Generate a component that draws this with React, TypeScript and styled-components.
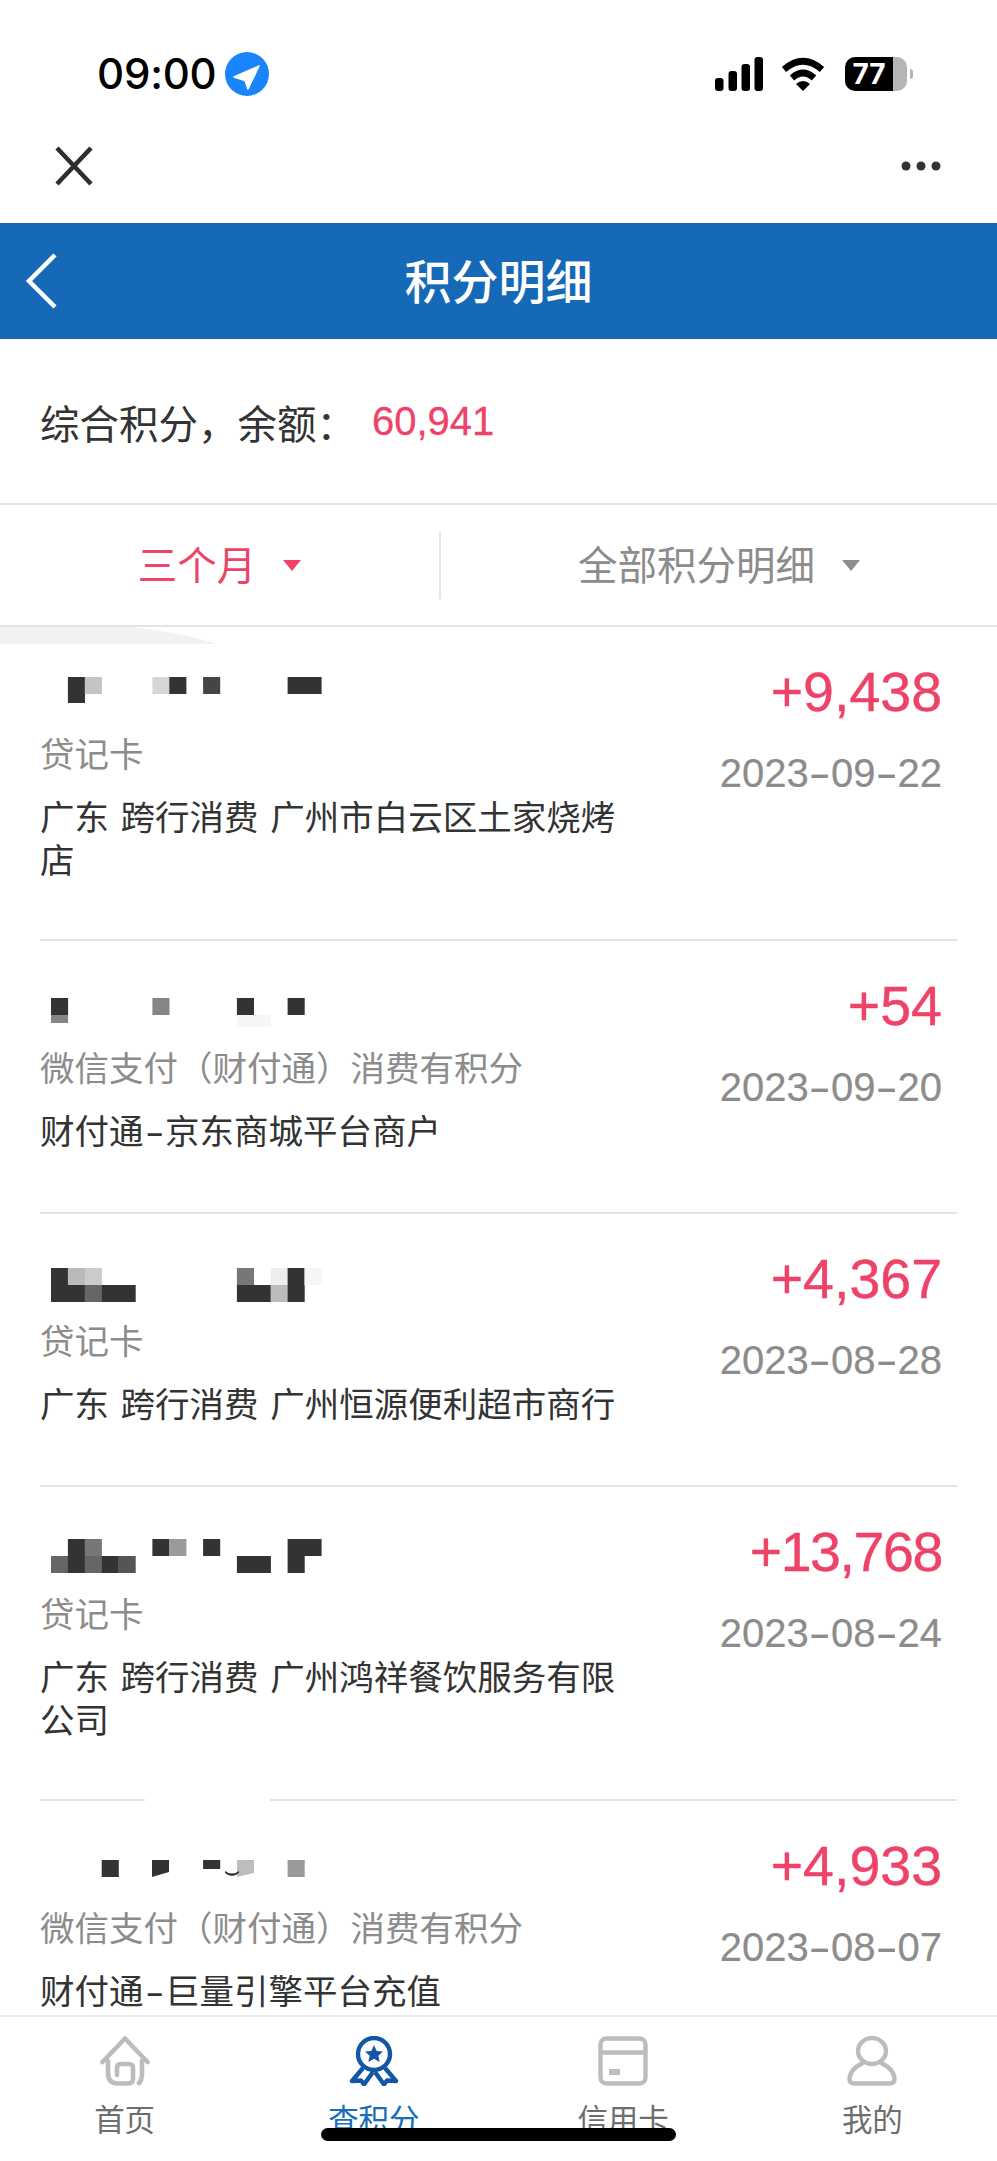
import React from 'react';
import styled, { createGlobalStyle } from 'styled-components';

const Global = createGlobalStyle`
  html, body { margin: 0; padding: 0; background: #fff; }
  body { font-family: "Liberation Sans", "Noto Sans CJK SC", sans-serif; }
  * { box-sizing: border-box; }
`;

const PINK = '#ee4268';

const Page = styled.div`
  position: relative;
  width: 997px;
  height: 2161px;
  display: flex;
  flex-direction: column;
  overflow: hidden;
  background: #fff;
`;

const StatusBar = styled.div`
  height: 130px;
  flex: none;
  display: flex;
  align-items: flex-start;
  justify-content: space-between;
  padding: 52px 84px 0 97px;
`;
const StatusLeft = styled.div`
  display: flex;
  align-items: center;
  gap: 8px;
`;
const Time = styled.span`
  font-family: Inter, "Liberation Sans", sans-serif;
  font-size: 42px;
  line-height: 44px;
  font-weight: 500;
  letter-spacing: -0.2px;
  color: #000;
`;
const StatusRight = styled.div`
  display: flex;
  align-items: center;
  height: 44px;
`;
const Battery = styled.div`
  width: 62px;
  height: 34px;
  margin-left: 20px;
  border-radius: 10px;
  display: flex;
  align-items: center;
  justify-content: center;
  padding-right: 14px;
  background: linear-gradient(90deg, #000 0 48px, #b5b5b5 48px);
  color: #fff;
  font-family: Inter, "Liberation Sans", sans-serif;
  font-weight: 700;
  font-size: 28px;
  line-height: 34px;
`;
const BatteryCap = styled.div`
  width: 3px;
  height: 10px;
  margin-left: 3px;
  border-radius: 0 3px 3px 0;
  background: #b5b5b5;
`;

const Toolbar = styled.div`
  height: 93px;
  flex: none;
  display: flex;
  align-items: center;
  justify-content: space-between;
  padding: 0 56px 22px 54px;
`;

const Header = styled.div`
  position: relative;
  height: 116px;
  flex: none;
  display: flex;
  align-items: center;
  justify-content: center;
  background: #1569b7;
`;
const BackButton = styled.div`
  position: absolute;
  left: 25px;
  top: 30px;
  display: flex;
`;
const Title = styled.h1`
  margin: 3px 0 0;
  color: #fff;
  font-size: 47px;
  line-height: 60px;
  font-weight: 500;
`;

const Balance = styled.div`
  height: 166px;
  flex: none;
  display: flex;
  align-items: center;
  padding-left: 40px;
  border-bottom: 2px solid #e4e4e4;
`;
const BalanceLabel = styled.span`
  width: 332px;
  font-size: 39.5px;
  color: #333;
  white-space: nowrap;
`;
const BalanceValue = styled.span`
  font-size: 40px;
  color: ${PINK};
  -webkit-text-stroke: 0.3px ${PINK};
`;

const Filters = styled.div`
  height: 122px;
  flex: none;
  display: grid;
  grid-template-columns: 439px 2px 1fr;
  align-items: center;
  border-bottom: 2px solid #e4e4e4;
`;
const FilterDivider = styled.div`
  width: 2px;
  height: 67px;
  background: #e6e6e6;
`;
const Filter = styled.div<{ $active?: boolean }>`
  display: flex;
  align-items: center;
  justify-content: center;
  gap: 27px;
  font-size: 39.5px;
  color: ${p => (p.$active ? PINK : '#8c8c8c')};
`;
const FilterText = styled.span`
  margin-top: -6px;
`;
const Caret = styled.span`
  width: 0;
  height: 0;
  border-left: 9px solid transparent;
  border-right: 9px solid transparent;
  border-top: 11px solid currentColor;
`;

const List = styled.div`
  position: relative;
  flex: 1;
  min-height: 0;
  overflow: hidden;
  padding: 0 40px;
`;
const Smudge = styled.div`
  position: absolute;
  left: 0;
  top: 0;
  width: 216px;
  height: 17px;
  background: #f2f2f2;
  clip-path: path('M0 0 H130 Q185 6 216 17 H0 Z');
`;
const Row = styled.div`
  position: relative;
  min-height: 273px;
  display: flex;
  justify-content: space-between;
  align-items: flex-start;
  border-bottom: 2px solid #e4e4e4;
`;
const Gap = styled.div`
  position: absolute;
  left: 105px;
  bottom: -3px;
  width: 125px;
  height: 4px;
  background: #fff;
`;
const Left = styled.div`
  width: 590px;
  padding: 50px 0 56px;
`;
const Mosaic = styled.svg`
  display: block;
  width: 400px;
  height: 56px;
`;
const Sub = styled.div`
  font-size: 34.5px;
  line-height: 44px;
  color: #8c8c8c;
  white-space: nowrap;
`;
const Desc = styled.div`
  margin-top: 20px;
  font-size: 34.5px;
  line-height: 43px;
  color: #333;
  word-spacing: 2px;
`;
const Right = styled.div`
  padding: 35px 15px 0 0;
  text-align: right;
`;
const Amount = styled.div<{ $tight?: boolean }>`
  font-size: 55.5px;
  line-height: 60px;
  letter-spacing: ${p => (p.$tight ? '-1.4px' : '0')};
  color: ${PINK};
  -webkit-text-stroke: 0.4px ${PINK};
`;
const DateText = styled.div`
  margin-top: 27px;
  font-size: 40px;
  line-height: 48px;
  color: #8c8c8c;
  -webkit-text-stroke: 0.2px #8c8c8c;
`;
const Dash = styled.span<{ $gap: number }>`
  display: inline-block;
  margin: 0 ${p => p.$gap}px;
  transform: scaleX(1.65);
`;

const TabBar = styled.div`
  height: 146px;
  flex: none;
  display: grid;
  grid-template-columns: repeat(4, 1fr);
  border-top: 2px solid #ececec;
  background: #fff;
`;
const Tab = styled.div<{ $active?: boolean }>`
  display: flex;
  flex-direction: column;
  align-items: center;
  padding-top: 19px;
  font-size: 30.5px;
  line-height: 40px;
  color: ${p => (p.$active ? '#1a6db8' : '#6e6e6e')};
`;
const TabLabel = styled.span`
  margin-top: 14px;
`;
const HomeIndicator = styled.div`
  position: absolute;
  left: 321px;
  top: 2128px;
  width: 355px;
  height: 13px;
  border-radius: 7px;
  background: #000;
`;

type Cell = { c: number; y: number; h?: number; w?: number; f?: string };
const D = '#333333';

const MosaicArt = ({ cells, extra }: { cells: Cell[]; extra?: React.ReactNode }) => (
  <Mosaic viewBox="0 0 400 56" aria-hidden="true">
    {cells.map((k, i) => (
      <rect
        key={i}
        x={11 + k.c * 16.9}
        y={k.y}
        width={(k.w ?? 1) * 16.9 + 0.2}
        height={k.h ?? 17}
        fill={k.f ?? D}
      />
    ))}
    {extra}
  </Mosaic>
);

const Hyphenated = ({ text, gap }: { text: string; gap: number }) => (
  <>
    {text.split('-').map((part, i) => (
      <React.Fragment key={i}>
        {i > 0 && <Dash $gap={gap}>-</Dash>}
        {part}
      </React.Fragment>
    ))}
  </>
);

const records: {
  cells: Cell[];
  extra?: React.ReactNode;
  sub: string;
  desc: string;
  amount: string;
  date: string;
  gap?: boolean;
  tight?: boolean;
}[] = [
  {
    cells: [
      { c: 1, y: 0, h: 26 },
      { c: 2, y: 0, f: '#c4c4c4' },
      { c: 6, y: 0, f: '#d6d6d6' },
      { c: 7, y: 0 },
      { c: 9, y: 0, f: '#454545' },
      { c: 14, y: 0, w: 2 },
    ],
    sub: '贷记卡',
    desc: '广东 跨行消费 广州市白云区土家烧烤店',
    amount: '+9,438',
    date: '2023-09-22',
  },
  {
    cells: [
      { c: 0, y: 7 },
      { c: 0, y: 24, h: 8, f: '#858585' },
      { c: 6, y: 7, f: '#858585' },
      { c: 11, y: 24, h: 12, w: 2, f: '#f6f6f6' },
      { c: 11, y: 7 },
      { c: 14, y: 7 },
    ],
    sub: '微信支付（财付通）消费有积分',
    desc: '财付通-京东商城平台商户',
    amount: '+54',
    date: '2023-09-20',
  },
  {
    cells: [
      { c: 0, y: 4 },
      { c: 1, y: 4, f: '#bababa' },
      { c: 2, y: 4, f: '#cbcbcb' },
      { c: 0, y: 21, w: 2 },
      { c: 2, y: 21, f: '#666666' },
      { c: 3, y: 21, w: 2 },
      { c: 11, y: 4, f: '#777777' },
      { c: 11, y: 21, w: 2 },
      { c: 13, y: 4, f: '#eeeeee' },
      { c: 13, y: 21, f: '#bcbcbc' },
      { c: 14, y: 4, h: 34 },
      { c: 15, y: 4, f: '#f6f6f6' },
    ],
    sub: '贷记卡',
    desc: '广东 跨行消费 广州恒源便利超市商行',
    amount: '+4,367',
    date: '2023-08-28',
  },
  {
    cells: [
      { c: 1, y: 2 },
      { c: 2, y: 2, f: '#777777' },
      { c: 6, y: 2 },
      { c: 7, y: 2, f: '#9a9a9a' },
      { c: 9, y: 2 },
      { c: 14, y: 2, w: 2 },
      { c: 0, y: 19, f: '#666666' },
      { c: 1, y: 19 },
      { c: 2, y: 19, f: '#666666' },
      { c: 3, y: 19 },
      { c: 4, y: 19, f: '#555555' },
      { c: 11, y: 19, w: 2 },
      { c: 14, y: 19 },
    ],
    sub: '贷记卡',
    desc: '广东 跨行消费 广州鸿祥餐饮服务有限公司',
    amount: '+13,768',
    date: '2023-08-24',
    gap: true,
    tight: true,
  },
  {
    cells: [
      { c: 3, y: 9 },
      { c: 9, y: 9, h: 9 },
      { c: 14, y: 9, f: '#999999' },
    ],
    extra: (
      <>
        <polygon points="112,9 129,9 129,21 112,26" fill={D} />
        <polygon points="197,9 214,9 214,22 197,26" fill="#bdbdbd" />
        <path d="M185 20 Q192 25 199 20 L199 22 Q192 28 185 22 Z" fill={D} />
      </>
    ),
    sub: '微信支付（财付通）消费有积分',
    desc: '财付通-巨量引擎平台充值',
    amount: '+4,933',
    date: '2023-08-07',
  },
];

const LocationBadge = () => (
  <svg width="44" height="44" viewBox="-22 -22 44 44" aria-hidden="true">
    <circle r="22" fill="#1a84fb" />
    <path d="M12 -8 L-13 3 L-2 6.5 L1 15 Z" fill="#fff" stroke="#fff" strokeWidth="1.5" strokeLinejoin="round" />
  </svg>
);

const Signal = () => (
  <svg width="48" height="34" viewBox="0 0 48 34" aria-hidden="true">
    <rect x="0" y="21" width="8.5" height="13" rx="3" fill="#000" />
    <rect x="13.5" y="14" width="8.5" height="20" rx="3" fill="#000" />
    <rect x="26.5" y="7" width="8.5" height="27" rx="3" fill="#000" />
    <rect x="39.5" y="0" width="8.5" height="34" rx="3" fill="#000" />
  </svg>
);

const Wifi = () => (
  <svg width="44" height="34" viewBox="0 0 44 34" style={{ marginLeft: 18 }} aria-hidden="true">
    <path d="M3 12.5 Q22 -4 41 12.5" fill="none" stroke="#000" strokeWidth="6.5" />
    <path d="M11 21 Q22 11 33 21" fill="none" stroke="#000" strokeWidth="6.5" />
    <path d="M15 27 Q22 21 29 27 L22 34 Z" fill="#000" />
  </svg>
);

const CloseIcon = () => (
  <svg width="40" height="40" viewBox="0 0 40 40" aria-hidden="true">
    <path d="M3 2 L37 38 M37 2 L3 38" stroke="#2e2e2e" strokeWidth="4.6" fill="none" />
  </svg>
);

const MoreIcon = () => (
  <svg width="40" height="10" viewBox="0 0 40 10" aria-hidden="true">
    <circle cx="5" cy="5" r="4.5" fill="#333" />
    <circle cx="20" cy="5" r="4.5" fill="#333" />
    <circle cx="35" cy="5" r="4.5" fill="#333" />
  </svg>
);

const BackIcon = () => (
  <svg width="32" height="56" viewBox="0 0 32 56" aria-hidden="true">
    <path d="M30 2 L4 28 L30 54" fill="none" stroke="#fff" strokeWidth="4.5" />
  </svg>
);

const GRAY = '#bcbcbc';

const HomeIcon = () => (
  <svg width="50" height="50" viewBox="0 0 50 50" fill="none" stroke={GRAY} strokeWidth="4.6" strokeLinecap="round" strokeLinejoin="round" aria-hidden="true">
    <path d="M2.5 26 L25 2.5 L47.5 26" />
    <path d="M8 25 V37 Q8 47.5 18 47.5 H28 Q33 47.5 33 43 V32 Q33 28 29 28 H21 Q17 28 17 32 V39" />
    <path d="M42 25 V38 Q42 44 39 47" />
  </svg>
);

const RibbonIcon = () => (
  <svg width="50" height="50" viewBox="0 0 50 50" fill="none" stroke="#1356a8" strokeWidth="4.4" strokeLinejoin="round" aria-hidden="true">
    <circle cx="25" cy="18" r="16" />
    <path d="M14 32 L3 45 L12 44.5 L15 48.5 L24 36" />
    <path d="M36 32 L47 45 L38 44.5 L35 48.5 L26 36" />
    <path
      d="M25 9 L27.7 15 L34 15.6 L29.3 19.8 L30.7 26 L25 22.8 L19.3 26 L20.7 19.8 L16 15.6 L22.3 15 Z"
      fill="#1356a8"
      stroke="none"
    />
  </svg>
);

const CardIcon = () => (
  <svg width="50" height="50" viewBox="0 0 50 50" fill="none" stroke={GRAY} strokeWidth="4.4" aria-hidden="true">
    <rect x="2.5" y="2.5" width="45" height="45" rx="6" />
    <path d="M2.5 16.5 H47.5" />
    <path d="M11 36 H22" strokeWidth="6" />
  </svg>
);

const PersonIcon = () => (
  <svg width="50" height="50" viewBox="0 0 50 50" fill="none" stroke={GRAY} strokeWidth="4.4" aria-hidden="true">
    <ellipse cx="25" cy="15" rx="14" ry="13" />
    <path d="M16 27 Q3 33 2.5 43 Q2.5 47.5 7 47.5 H43 Q47.5 47.5 47.5 43 Q47 33 34 27" />
  </svg>
);

export default function App() {
  return (
    <Page>
      <Global />
      <StatusBar>
        <StatusLeft>
          <Time>09:00</Time>
          <LocationBadge />
        </StatusLeft>
        <StatusRight>
          <Signal />
          <Wifi />
          <Battery>77</Battery>
          <BatteryCap />
        </StatusRight>
      </StatusBar>
      <Toolbar>
        <CloseIcon />
        <MoreIcon />
      </Toolbar>
      <Header>
        <BackButton>
          <BackIcon />
        </BackButton>
        <Title>积分明细</Title>
      </Header>
      <Balance>
        <BalanceLabel>综合积分，余额：</BalanceLabel>
        <BalanceValue>60,941</BalanceValue>
      </Balance>
      <Filters>
        <Filter $active>
          <FilterText>三个月</FilterText>
          <Caret />
        </Filter>
        <FilterDivider />
        <Filter>
          <FilterText>全部积分明细</FilterText>
          <Caret />
        </Filter>
      </Filters>
      <List>
        <Smudge />
        {records.map(r => (
          <Row key={r.date}>
            <Left>
              <MosaicArt cells={r.cells} extra={r.extra} />
              <Sub>{r.sub}</Sub>
              <Desc>
                <Hyphenated text={r.desc} gap={5} />
              </Desc>
            </Left>
            <Right>
              <Amount $tight={r.tight}>{r.amount}</Amount>
              <DateText>
                <Hyphenated text={r.date} gap={4.4} />
              </DateText>
            </Right>
            {r.gap && <Gap />}
          </Row>
        ))}
      </List>
      <TabBar>
        <Tab>
          <HomeIcon />
          <TabLabel>首页</TabLabel>
        </Tab>
        <Tab $active>
          <RibbonIcon />
          <TabLabel>查积分</TabLabel>
        </Tab>
        <Tab>
          <CardIcon />
          <TabLabel>信用卡</TabLabel>
        </Tab>
        <Tab>
          <PersonIcon />
          <TabLabel>我的</TabLabel>
        </Tab>
      </TabBar>
      <HomeIndicator />
    </Page>
  );
}
